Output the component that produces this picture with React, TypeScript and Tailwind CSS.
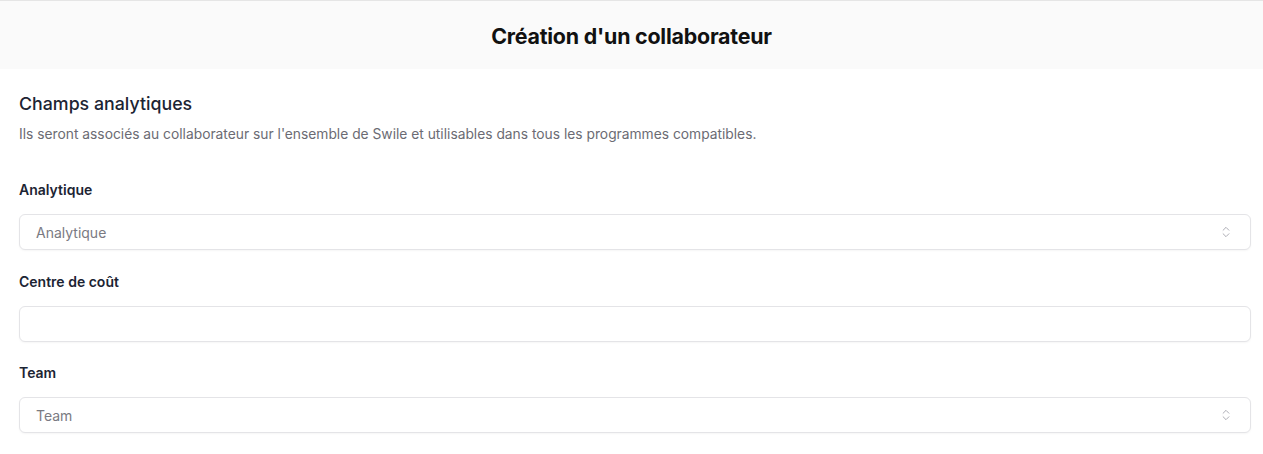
import { ChevronsUpDown } from 'lucide-react';

type FieldProps = {
  label: string;
  placeholder?: string;
  select?: boolean;
};

const Field = ({ label, placeholder, select }: FieldProps) => (
  <div className="flex flex-col">
    <label className="text-[14px] font-semibold leading-[20px] text-[#1c2433]">
      {label}
    </label>
    <div className="mt-[14px] flex h-[36px] items-center justify-between rounded-[6px] border border-[#e4e4e7] bg-white pl-[16px] pr-[17px] shadow-[0_1px_2px_rgba(0,0,0,0.04)]">
      <span className="text-[14px] text-[#7a7a82]">{placeholder}</span>
      {select && (
        <ChevronsUpDown className="h-[14px] w-[14px] text-[#a1a1aa]" strokeWidth={1.5} />
      )}
    </div>
  </div>
);

export default function App() {
  return (
    <div
      className="min-h-[454px] bg-white"
      style={{ fontFamily: 'Inter, "Noto Sans", sans-serif' }}
    >
      <header className="flex h-[69px] items-center justify-center border-t border-[#e5e5e5] bg-[#fafafa] pt-[3px]">
        <h1 className="text-[21.4px] font-bold tracking-[-0.01em] text-[#111111]">
          Création d'un collaborateur
        </h1>
      </header>

      <main className="pl-[19px] pr-[12px] pt-[23px]">
        <h2 className="text-[17.8px] font-medium leading-[24px] text-[#1c2433]">
          Champs analytiques
        </h2>
        <p className="mt-[8px] text-[13.8px] leading-[20px] text-[#6b6b73]">
          Ils seront associés au collaborateur sur l'ensemble de Swile et utilisables dans tous les programmes compatibles.
        </p>

        <div className="mt-[36px] flex flex-col gap-[21.5px]">
          <Field label="Analytique" placeholder="Analytique" select />
          <Field label="Centre de coût" />
          <Field label="Team" placeholder="Team" select />
        </div>
      </main>
    </div>
  );
}
